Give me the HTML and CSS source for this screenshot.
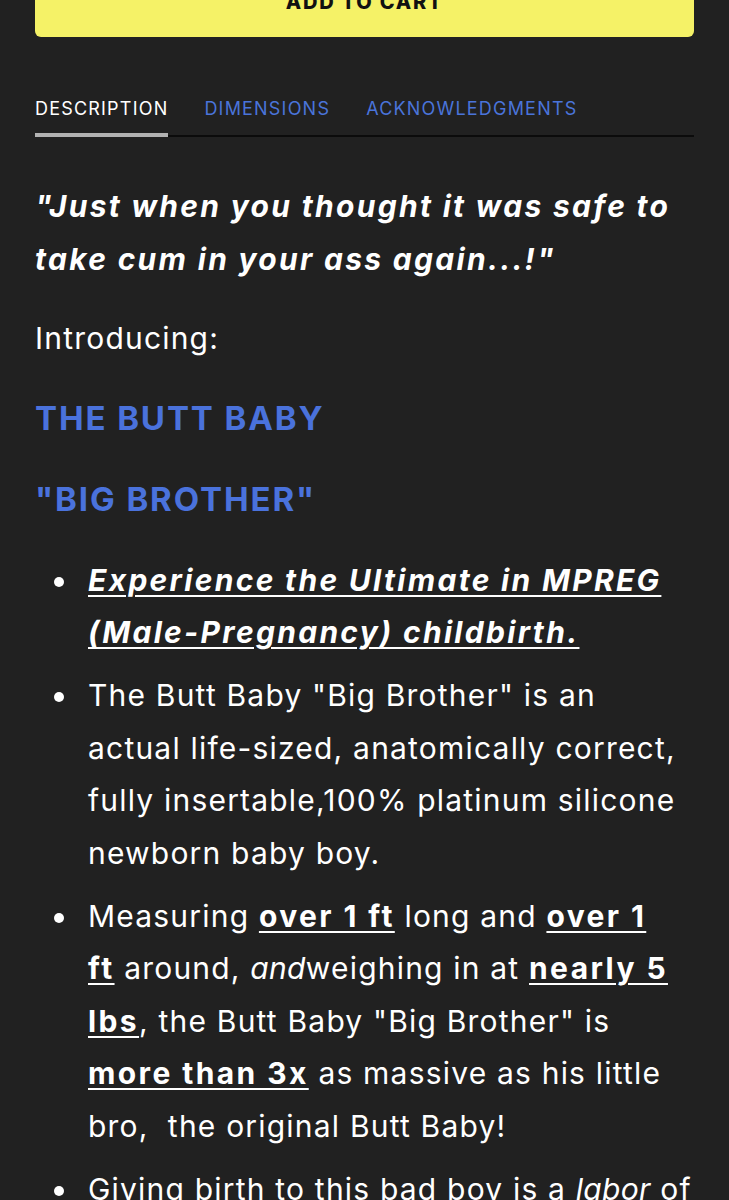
FILE: index.html
```html
<!DOCTYPE html>
<html lang="en">
<head>
<meta charset="utf-8">
<title>The Butt Baby "Big Brother"</title>
<link rel="stylesheet" href="styles.css">
</head>
<body>
<main class="product">
  <button class="add-to-cart" type="button">ADD TO CART</button>

  <nav class="tabs">
    <a class="tab active" href="#description">DESCRIPTION</a>
    <a class="tab" href="#dimensions">DIMENSIONS</a>
    <a class="tab" href="#acknowledgments">ACKNOWLEDGMENTS</a>
  </nav>

  <section class="description" id="description">
    <p class="tagline">"Just when you thought it was safe to take cum in your ass again...!"</p>
    <p>Introducing:</p>
    <h3 class="title">THE BUTT BABY</h3>
    <h3 class="title">"BIG BROTHER"</h3>
    <ul class="features">
      <li><u><strong><em>Experience the Ultimate in MPREG (Male-Pregnancy) childbirth.</em></strong></u></li>
      <li>The Butt Baby "Big Brother" is an actual life-sized, anatomically correct, fully insertable,100% platinum silicone newborn baby boy.</li>
      <li>Measuring <u><strong>over 1 ft</strong></u> long and <u><strong>over 1 ft</strong></u>&nbsp;around, <em>and</em>weighing in at <u><strong>nearly 5 lbs</strong></u>, the Butt Baby "Big Brother" is <u><strong>more than 3x</strong></u> as massive as his little bro,&nbsp; the original Butt Baby!</li>
      <li>Giving birth to this bad boy is a <em>labor</em> of love!</li>
    </ul>
  </section>
</main>
</body>
</html>
```

FILE: styles.css
```css
html, body {
  margin: 0;
  padding: 0;
  background: #212121;
}

body {
  font-family: Inter, "Noto Sans", sans-serif;
  color: #ffffff;
  overflow: hidden;
}

.product {
  padding: 0 35px;
}

/* Add to cart */
.add-to-cart {
  display: block;
  box-sizing: border-box;
  width: 100%;
  height: 70px;
  margin-top: -33px;
  padding: 0;
  border: 0;
  border-radius: 6px;
  background: #f5f267;
  color: #111111;
  font-family: Inter, sans-serif;
  font-weight: 800;
  font-size: 20px;
  letter-spacing: 1.8px;
  line-height: 20px;
  text-align: center;
}

/* Tabs */
.tabs {
  display: flex;
  gap: 36px;
  margin-top: 60px;
  border-bottom: 2px solid #0b0b0b;
}

.tab {
  display: block;
  padding-bottom: 12px;
  margin-bottom: -2px;
  border-bottom: 4px solid transparent;
  font-size: 18px;
  line-height: 24px;
  letter-spacing: 1.2px;
  color: #4a74da;
  text-decoration: none;
}

.tab.active {
  color: #ffffff;
  border-bottom-color: #b2b2b2;
}

/* Description body */
.description {
  padding-top: 43px;
  font-size: 30px;
  line-height: 52.5px;
  letter-spacing: 1.2px;
}

.description p {
  margin: 0 0 27px;
}

.description strong {
  letter-spacing: 2.4px;
}

.description em {
  letter-spacing: 0.3px;
}

.tagline,
.features strong em {
  font-weight: 700;
  font-style: italic;
  letter-spacing: 2.3px;
}

.title {
  margin: 0 0 28.5px;
  font-size: 33px;
  line-height: 52.5px;
  font-weight: 700;
  letter-spacing: 1.9px;
  color: #4a72dc;
}

.features {
  margin: 0;
  padding: 0 0 0 53px;
  list-style: none;
}

.features li {
  margin-bottom: 10.5px;
}

/* round bullet sitting on the x-height */
.features li::before {
  content: "";
  display: inline-block;
  width: 10px;
  height: 10px;
  margin-left: -34.5px;
  margin-right: 24.5px;
  border-radius: 50%;
  background: #ffffff;
  vertical-align: 4px;
}

.features u {
  text-decoration-thickness: 2px;
  text-underline-offset: 4px;
}
```
